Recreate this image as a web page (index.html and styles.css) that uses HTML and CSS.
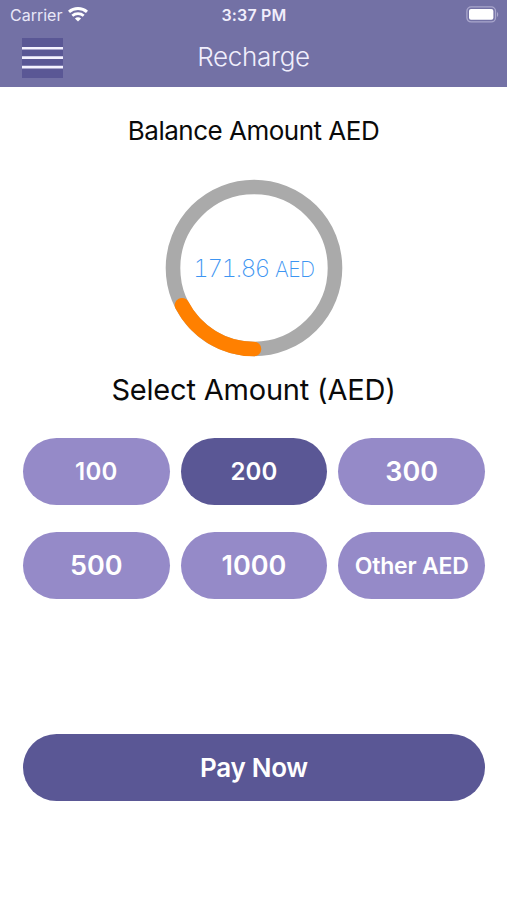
FILE: index.html
```html
<!DOCTYPE html>
<html lang="en">
  <head>
    <meta charset="UTF-8" />
    <meta name="viewport" content="width=device-width, initial-scale=1.0" />
    <title>Recharge</title>
    <link rel="stylesheet" href="styles.css">
  </head>
  <body>
    <header class="header">
      <div class="status-bar">
        <div class="carrier">
          <span class="carrier-name">Carrier</span>
          <svg width="20" height="15" viewBox="0 0 20 15" fill="none">
            <path d="M1 4.9C6 .4 14 .4 19 4.9" stroke="white" stroke-width="3" />
            <path d="M4.3 8.7C7.5 5.9 12.5 5.9 15.7 8.7" stroke="white" stroke-width="2.8" />
            <path d="M10 14.6L6.9 11.5C8.7 9.9 11.3 9.9 13.1 11.5Z" fill="white" />
          </svg>
        </div>
        <div class="time">3:37 PM</div>
        <svg class="battery" width="33" height="17" viewBox="0 0 33 17" fill="none">
          <rect x="0.9" y="0.9" width="28.6" height="15" rx="4.2" stroke="#a9a6cc" stroke-width="1.3" />
          <rect x="3" y="3" width="24.4" height="10.8" rx="2" fill="white" />
          <path d="M31 6V11C32.6 10.3 32.6 6.7 31 6Z" fill="#a9a6cc" />
        </svg>
      </div>
      <div class="nav-bar">
        <button class="menu-button" aria-label="Menu">
          <svg width="41" height="40" viewBox="0 0 41 40" fill="none">
            <path d="M0 10.2H41M0 19.6H41M0 29.1H41" stroke="#f4f2ff" stroke-width="2.6" />
          </svg>
        </button>
        <h1 class="title">Recharge</h1>
      </div>
    </header>

    <main class="content">
      <h2 class="balance-title">Balance Amount AED</h2>

      <div class="balance-ring">
        <svg class="ring" width="178" height="178" viewBox="0 0 178 178" fill="none">
          <circle cx="89" cy="89" r="81" stroke="#aaaaaa" stroke-width="14.6" />
          <path
            d="M89 170A81 81 0 0 1 17 126.2"
            stroke="#ff8000"
            stroke-width="14.6"
            stroke-linecap="round"
          />
        </svg>
        <div class="balance"><span class="balance-value">171.86</span><span class="balance-unit">AED</span></div>
      </div>

      <h2 class="select-title">Select Amount (AED)</h2>

      <div class="amounts">
        <button class="amount small">100</button>
        <button class="amount small selected">200</button>
        <button class="amount">300</button>
        <button class="amount">500</button>
        <button class="amount">1000</button>
        <button class="amount other">Other AED</button>
      </div>

      <button class="pay-button">Pay Now</button>
    </main>
  </body>
</html>
```

FILE: styles.css
```css
body {
  margin: 0;
  background-color: #fff;
  font-family: "Inter", sans-serif;
  color: #0a0a0a;
}

h1,
h2 {
  margin: 0;
  font-weight: 400;
  white-space: nowrap;
}

button {
  border: none;
  padding: 0;
  font-family: inherit;
  cursor: pointer;
}

.header {
  height: 87px;
  background-color: #7371a5;
  color: #fff;
}

.status-bar {
  display: grid;
  grid-template-columns: 1fr auto 1fr;
  align-items: center;
  height: 29px;
  padding: 0 8px 0 9px;
}

.carrier {
  display: flex;
  align-items: center;
  gap: 6px;
  padding-left: 1px;
  color: #e9e7f8;
  font-size: 16px;
}

.time {
  color: #f0eefc;
  font-size: 16px;
  font-weight: 600;
  letter-spacing: 0.2px;
}

.battery {
  justify-self: end;
}

.nav-bar {
  display: grid;
  grid-template-columns: 41px 1fr 41px;
  align-items: center;
  height: 56px;
  padding: 0 22px;
}

.menu-button {
  height: 40px;
  margin-top: 1px;
  background-color: #5a5795;
}

.menu-button svg {
  display: block;
}

.title {
  margin-top: -2px;
  text-align: center;
  font-size: 26px;
  font-weight: 300;
  letter-spacing: -0.3px;
  color: #f0eefc;
}

.content {
  display: flex;
  flex-direction: column;
  align-items: center;
  padding: 26px 22px 0 23px;
}

.balance-title {
  margin-left: -1px;
  font-size: 26px;
  line-height: 36px;
  letter-spacing: -0.5px;
}

.balance-ring {
  display: grid;
  place-items: center;
  margin-top: 30px;
}

.ring,
.balance {
  grid-area: 1 / 1;
}

.balance {
  display: flex;
  align-items: baseline;
  gap: 6px;
  padding-top: 1px;
  color: #3d95f2;
  font-weight: 200;
}

.balance-value {
  font-size: 24px;
  font-variant-numeric: tabular-nums;
  letter-spacing: -1.4px;
}

.balance-unit {
  font-size: 21px;
  letter-spacing: -0.5px;
}

.select-title {
  margin-top: 13px;
  margin-left: -1px;
  font-size: 29px;
  line-height: 40px;
  letter-spacing: -0.2px;
}

.amounts {
  display: grid;
  grid-template-columns: repeat(3, 1fr);
  gap: 27px 11px;
  width: 100%;
  margin-top: 28px;
}

.amount,
.pay-button {
  height: 67px;
  border-radius: 34px;
  color: #fff;
  font-size: 27px;
  font-weight: 600;
}

.amount {
  background-color: #958ac8;
}

.small {
  font-size: 24px;
  letter-spacing: 0.2px;
}

.other {
  font-size: 23px;
  letter-spacing: -0.2px;
}

.selected,
.pay-button {
  background-color: #5a5795;
}

.pay-button {
  width: 100%;
  margin-top: 135px;
  font-size: 26px;
  letter-spacing: -0.3px;
}
```
